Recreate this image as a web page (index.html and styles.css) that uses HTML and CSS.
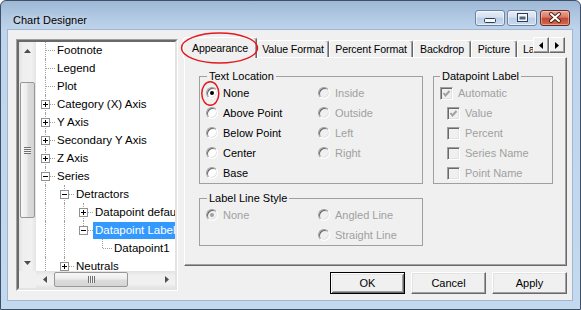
FILE: index.html
```html
<!DOCTYPE html>
<html>
<head>
<meta charset="utf-8">
<title>Chart Designer</title>
<link rel="stylesheet" href="styles.css">
</head>
<body>
<div class="window">
  <div class="titlebar">
    <span class="title">Chart Designer</span>
    <div class="caption">
      <span class="cbtn cmin"><svg width="28" height="14" viewBox="0 0 28 14"><rect x="8.5" y="7.5" width="11" height="4" rx="1" fill="#f4f7fb" stroke="#2f3d52"/></svg></span>
      <span class="cbtn cmax"><svg width="28" height="14" viewBox="0 0 28 14"><rect x="9.5" y="2.5" width="10" height="8" fill="#f4f7fb" stroke="#2f3d52"/><rect x="11.5" y="5.5" width="6" height="3" fill="#53647c"/></svg></span>
      <span class="cbtn cclose"><svg width="28" height="14" viewBox="0 0 28 14"><path d="M10 3 L18 10 M18 3 L10 10" stroke="#4a2219" stroke-width="4" stroke-linecap="round"/><path d="M10 3 L18 10 M18 3 L10 10" stroke="#ffffff" stroke-width="2" stroke-linecap="round"/></svg></span>
    </div>
  </div>
  <div class="client">
    <div class="tree">
      <div class="tree-inner">
        <div class="vscroll">
          <div class="sarrow"><svg width="7" height="4"><path d="M0 4 L3.5 0 L7 4Z" fill="#4d4d4d"/></svg></div>
          <div class="thumb vthumb"></div>
          <div class="sarrow end"><svg width="7" height="4"><path d="M0 0 L3.5 4 L7 0Z" fill="#4d4d4d"/></svg></div>
        </div>
        <div class="tree-view">
          <div class="rows">
            <div class="row"><span class="g t"></span><span class="lbl">Footnote</span></div>
            <div class="row"><span class="g t"></span><span class="lbl">Legend</span></div>
            <div class="row"><span class="g t"></span><span class="lbl">Plot</span></div>
            <div class="row"><span class="g t"><i class="bx p"></i></span><span class="lbl">Category (X) Axis</span></div>
            <div class="row"><span class="g t"><i class="bx p"></i></span><span class="lbl">Y Axis</span></div>
            <div class="row"><span class="g t"><i class="bx p"></i></span><span class="lbl">Secondary Y Axis</span></div>
            <div class="row"><span class="g t"><i class="bx p"></i></span><span class="lbl">Z Axis</span></div>
            <div class="row"><span class="g t"><i class="bx m"></i></span><span class="lbl">Series</span></div>
            <div class="row"><span class="g v"></span><span class="g t"><i class="bx m"></i></span><span class="lbl">Detractors</span></div>
            <div class="row"><span class="g v"></span><span class="g v"></span><span class="g t"><i class="bx p"></i></span><span class="lbl">Datapoint defaults</span></div>
            <div class="row"><span class="g v"></span><span class="g v"></span><span class="g l"><i class="bx m"></i></span><span class="lbl sel">Datapoint Labels</span></div>
            <div class="row"><span class="g v"></span><span class="g v"></span><span class="g"></span><span class="g l"></span><span class="lbl">Datapoint1</span></div>
            <div class="row"><span class="g v"></span><span class="g t"><i class="bx p"></i></span><span class="lbl">Neutrals</span></div>
          </div>
        </div>
        <div class="corner"></div>
        <div class="hscroll">
          <div class="sarrow h"><svg width="4" height="7"><path d="M4 0 L0 3.5 L4 7Z" fill="#4d4d4d"/></svg></div>
          <div class="thumb hthumb"></div>
          <div class="sarrow h end"><svg width="4" height="7"><path d="M0 0 L4 3.5 L0 7Z" fill="#4d4d4d"/></svg></div>
        </div>
      </div>
    </div>

    <div class="right">
      <div class="tabstrip">
        <div class="tabs">
          <div class="tab sel t-app">Appearance</div>
          <div class="tab t-vf">Value Format</div>
          <div class="tab t-pf">Percent Format</div>
          <div class="tab t-bd">Backdrop</div>
          <div class="tab t-pi">Picture</div>
          <div class="tab t-la">Labels</div>
        </div>
        <div class="tabarrows">
          <span class="abtn"><svg width="4" height="7"><path d="M4 0 L0 3.5 L4 7Z" fill="#000"/></svg></span>
          <span class="abtn"><svg width="4" height="7"><path d="M0 0 L4 3.5 L0 7Z" fill="#000"/></svg></span>
        </div>
      </div>

      <div class="panel">
        <fieldset class="grp g-text">
          <legend>Text Location</legend>
          <div class="opts five">
            <label class="opt"><span class="radio on"></span>None</label>
            <label class="opt"><span class="radio"></span>Above Point</label>
            <label class="opt"><span class="radio"></span>Below Point</label>
            <label class="opt"><span class="radio"></span>Center</label>
            <label class="opt"><span class="radio"></span>Base</label>
            <label class="opt dis"><span class="radio"></span>Inside</label>
            <label class="opt dis"><span class="radio"></span>Outside</label>
            <label class="opt dis"><span class="radio"></span>Left</label>
            <label class="opt dis"><span class="radio"></span>Right</label>
          </div>
        </fieldset>

        <fieldset class="grp g-label">
          <legend>Datapoint Label</legend>
          <div class="checks">
            <label class="opt dis"><span class="check on"><svg width="9" height="9"><path d="M1.5 4 L3.5 6.5 L7.5 2" fill="none" stroke="#a0a0a0" stroke-width="2"/></svg></span>Automatic</label>
            <label class="opt dis sub"><span class="check on"><svg width="9" height="9"><path d="M1.5 4 L3.5 6.5 L7.5 2" fill="none" stroke="#a0a0a0" stroke-width="2"/></svg></span>Value</label>
            <label class="opt dis sub"><span class="check"></span>Percent</label>
            <label class="opt dis sub"><span class="check"></span>Series Name</label>
            <label class="opt dis sub"><span class="check"></span>Point Name</label>
          </div>
        </fieldset>

        <fieldset class="grp g-line">
          <legend>Label Line Style</legend>
          <div class="opts two">
            <label class="opt dis"><span class="radio on"></span>None</label>
            <span></span>
            <label class="opt dis"><span class="radio"></span>Angled Line</label>
            <label class="opt dis"><span class="radio"></span>Straight Line</label>
          </div>
        </fieldset>
      </div>

      <div class="buttons">
        <button class="btn default">OK</button>
        <button class="btn">Cancel</button>
        <button class="btn">Apply</button>
      </div>
    </div>
  </div>

  <svg class="annot" width="581" height="310" viewBox="0 0 581 310">
    <ellipse cx="219.5" cy="48" rx="38" ry="15" fill="none" stroke="#e3191f" stroke-width="1.5"/>
    <ellipse cx="210.3" cy="93.5" rx="8.5" ry="11.8" fill="none" stroke="#e3191f" stroke-width="1.5"/>
  </svg>
</div>
</body>
</html>
```

FILE: styles.css
```css
html, body {
  margin: 0;
  padding: 0;
  background: #ffffff;
}

body {
  font-family: "Liberation Sans", Arial, sans-serif;
  font-size: 11px;
  color: #000;
}

.window {
  position: relative;
  width: 581px;
  height: 310px;
  box-sizing: border-box;
  border: 1px solid #3e4f66;
  border-radius: 6px 6px 0 0;
  background: linear-gradient(180deg, #9db7d5 0px, #b2c9e3 16px, #bfd5ed 30px, #c3d9f0 100%);
  padding: 0 7px 8px 6px;
  display: flex;
  flex-direction: column;
}

/* ---------- title bar ---------- */
.titlebar {
  height: 28px;
  display: flex;
  align-items: flex-start;
  flex: none;
}

.title {
  margin: 12px 0 0 6px;
  font-size: 11px;
  line-height: 14px;
  color: #000;
  text-shadow: 0 0 6px rgba(255, 255, 255, 0.7);
}

.caption {
  margin: 9px 3px 0 auto;
  display: flex;
}

.cbtn {
  width: 30px;
  height: 16px;
  box-sizing: border-box;
  border: 1px solid #6f83a0;
  border-radius: 3px;
  background: linear-gradient(180deg, #e6eef8 0%, #d3e0f0 45%, #bccfe7 50%, #c8daef 100%);
  box-shadow: inset 0 0 0 1px rgba(255, 255, 255, 0.55);
  display: flex;
  align-items: center;
  justify-content: center;
}

.cmax {
  margin-left: 2px;
}

.cclose {
  margin-left: 3px;
  border-color: #6c2a22;
  background: linear-gradient(180deg, #e8a696 0%, #d57a68 45%, #c2472f 50%, #cf6a50 100%);
  box-shadow: inset 0 0 0 1px rgba(255, 220, 210, 0.45);
}

/* ---------- client ---------- */
.client {
  height: 272px;
  box-sizing: border-box;
  border: 1px solid #a2b6cd;
  background: #f0f0f0;
  padding: 7px 5px 6px 8px;
  display: flex;
  flex: none;
}

/* ---------- tree ---------- */
.tree {
  width: 162px;
  height: 252px;
  margin-top: 2px;
  box-sizing: border-box;
  border: 1px solid;
  border-color: #a0a0a0 #ffffff #ffffff #a0a0a0;
  flex: none;
}

.tree-inner {
  height: 100%;
  box-sizing: border-box;
  border: 2px solid;
  border-color: #696969 #e3e3e3 #e3e3e3 #696969;
  background: #fff;
  display: grid;
  grid-template-columns: 17px 1fr;
  grid-template-rows: 1fr 17px;
  overflow: hidden;
}

.vscroll {
  grid-column: 1;
  grid-row: 1;
  display: flex;
  flex-direction: column;
  background: linear-gradient(90deg, #e2e2e2 0%, #efefef 25%, #f1f1f1 75%, #e4e4e4 100%);
}

.hscroll {
  grid-column: 2;
  grid-row: 2;
  display: flex;
  background: linear-gradient(180deg, #e2e2e2 0%, #efefef 25%, #f1f1f1 75%, #e4e4e4 100%);
}

.corner {
  grid-column: 1;
  grid-row: 2;
  background: #f0f0f0;
}

.tree-view {
  grid-column: 2;
  grid-row: 1;
  overflow: hidden;
  position: relative;
}

.sarrow {
  height: 17px;
  flex: none;
  display: flex;
  align-items: center;
  justify-content: center;
}

.sarrow.h {
  width: 17px;
  height: auto;
}

.sarrow.end {
  margin-top: auto;
}

.sarrow.h.end {
  margin-top: 0;
  margin-left: auto;
}

.thumb {
  box-sizing: border-box;
  border: 1px solid #979797;
  border-radius: 2px;
  display: flex;
  align-items: center;
  justify-content: center;
  flex: none;
}

.vthumb {
  margin: 23px 1px 0;
  height: 136px;
  background: linear-gradient(90deg, #f7f7f7 0%, #ececec 45%, #dcdcdc 55%, #d4d4d4 100%);
}

.hthumb {
  margin: 1px 0 1px 1px;
  width: 74px;
  background: linear-gradient(180deg, #f7f7f7 0%, #ececec 45%, #dcdcdc 55%, #d4d4d4 100%);
}

.vthumb::after {
  content: "";
  width: 7px;
  height: 7px;
  background: repeating-linear-gradient(180deg, #6f6f6f 0 1px, #f4f4f4 1px 2px);
}

.hthumb::after {
  content: "";
  width: 7px;
  height: 7px;
  background: repeating-linear-gradient(90deg, #6f6f6f 0 1px, #f4f4f4 1px 2px);
}

.rows {
  margin-top: -1px;
}

.row {
  height: 18px;
  display: flex;
  white-space: nowrap;
  font-size: 11.5px;
}

.g {
  width: 19px;
  height: 18px;
  flex: none;
  position: relative;
}

.g.v::before,
.g.t::before,
.g.l::before {
  content: "";
  position: absolute;
  left: 9px;
  top: 0;
  height: 18px;
  border-left: 1px dotted #a0a0a0;
}

.g.l::before {
  height: 9px;
}

.g.t::after,
.g.l::after {
  content: "";
  position: absolute;
  left: 10px;
  top: 9px;
  width: 9px;
  border-top: 1px dotted #a0a0a0;
}

.bx {
  position: absolute;
  left: 5px;
  top: 5px;
  width: 9px;
  height: 9px;
  box-sizing: border-box;
  border: 1px solid #919191;
  background: #fff;
  z-index: 1;
}

.bx::before {
  content: "";
  position: absolute;
  left: 1px;
  top: 3px;
  width: 5px;
  height: 1px;
  background: #000;
}

.bx.p::after {
  content: "";
  position: absolute;
  left: 3px;
  top: 1px;
  width: 1px;
  height: 5px;
  background: #000;
}

.lbl {
  flex: none;
  padding: 0 2px;
  height: 17px;
  line-height: 17px;
  margin-top: 1px;
}

.lbl.sel {
  background: #3399ff;
  color: #fff;
}

/* ---------- right side ---------- */
.right {
  width: 384px;
  margin-left: 5px;
  display: flex;
  flex-direction: column;
  flex: none;
}

.tabstrip {
  height: 21px;
  display: flex;
  position: relative;
  z-index: 1;
  flex: none;
}

.tabs {
  width: 350px;
  height: 21px;
  overflow: hidden;
  display: flex;
  align-items: flex-start;
  flex: none;
}

.tab {
  flex: none;
  height: 17px;
  margin-top: 3px;
  box-sizing: border-box;
  border-top: 1px solid #fff;
  border-left: 1px solid #fff;
  border-right: 1px solid #696969;
  box-shadow: inset -1px 0 0 #a0a0a0;
  border-radius: 3px 3px 0 0;
  background: #f0f0f0;
  font-size: 10.6px;
  letter-spacing: -0.1px;
  line-height: 16px;
  text-align: center;
  white-space: nowrap;
  overflow: hidden;
}

.tab.sel {
  height: 21px;
  margin-top: 0;
  padding-top: 2px;
}

.t-app { width: 74px; }
.t-vf { width: 72px; }
.t-pf { width: 84px; }
.t-bd { width: 58px; }
.t-pi { width: 46px; }
.t-la { width: 60px; text-align: left; padding-left: 5px; }

.tabarrows {
  display: flex;
  flex: none;
}

.abtn {
  width: 16px;
  height: 16px;
  box-sizing: border-box;
  border: 1px solid;
  border-color: #fff #696969 #696969 #fff;
  box-shadow: inset -1px -1px 0 #a0a0a0;
  background: #f0f0f0;
  display: flex;
  align-items: center;
  justify-content: center;
}

.panel {
  margin: -1px 0 0 1px;
  height: 209px;
  box-sizing: border-box;
  border: 1px solid;
  border-color: #fff #696969 #696969 #fff;
  box-shadow: inset -1px -1px 0 #a0a0a0;
  padding: 12px 0 0 14px;
  display: grid;
  grid-template-columns: 224px 120px;
  column-gap: 10px;
  row-gap: 8px;
  align-content: start;
  align-items: start;
  flex: none;
}

fieldset.grp {
  margin: 0;
  padding: 0 6px;
  border: 1px solid #a0a0a0;
  min-width: 0;
}

legend {
  padding: 0 2px;
  margin-left: 1px;
  font-size: 11px;
  line-height: 13px;
}

.g-label {
  padding-left: 5px;
}

.g-label legend {
  margin-left: 0;
}

.g-line {
  grid-column: 1;
  padding-top: 1px;
  padding-bottom: 2px;
}

.opts {
  display: grid;
  grid-template-columns: 112px 1fr;
  grid-auto-flow: column;
}

.opts.five {
  grid-template-rows: repeat(5, 20px);
}

.opts.two {
  grid-template-rows: repeat(2, 20px);
}

.checks {
  display: flex;
  flex-direction: column;
}

.opt {
  height: 20px;
  display: flex;
  align-items: center;
  gap: 5px;
  white-space: nowrap;
}

.opt.dis {
  color: #a0a0a0;
}

.opt.sub {
  margin-left: 7px;
}

.radio {
  width: 12px;
  height: 12px;
  box-sizing: border-box;
  border-radius: 50%;
  border: 1px solid;
  border-color: #a0a0a0 #ffffff #ffffff #a0a0a0;
  box-shadow: inset 1px 1px 0 #696969, inset -1px -1px 0 #e3e3e3;
  background: #fff;
  position: relative;
  flex: none;
}

.opt.dis .radio {
  background: #f0f0f0;
}

.radio.on::after {
  content: "";
  position: absolute;
  left: 3px;
  top: 3px;
  width: 4px;
  height: 4px;
  border-radius: 50%;
  background: #000;
}

.opt.dis .radio.on::after {
  background: #a0a0a0;
}

.check {
  width: 13px;
  height: 13px;
  box-sizing: border-box;
  border: 1px solid;
  border-color: #a0a0a0 #ffffff #ffffff #a0a0a0;
  box-shadow: inset 1px 1px 0 #696969, inset -1px -1px 0 #e3e3e3;
  background: #f0f0f0;
  display: flex;
  align-items: center;
  justify-content: center;
  flex: none;
}

.buttons {
  margin-top: 6px;
  display: flex;
  justify-content: flex-end;
  gap: 6px;
}

.btn {
  width: 75px;
  height: 22px;
  box-sizing: border-box;
  margin: 0;
  padding: 0;
  font-family: "Liberation Sans", Arial, sans-serif;
  font-size: 11px;
  color: #000;
  background: #f0f0f0;
  border: 1px solid;
  border-color: #fff #696969 #696969 #fff;
  box-shadow: inset -1px -1px 0 #a0a0a0, inset 1px 1px 0 #e3e3e3;
  border-radius: 0;
}

.btn.default {
  border-color: #000;
  box-shadow: inset 1px 1px 0 #fff, inset -1px -1px 0 #696969, inset 2px 2px 0 #e3e3e3, inset -2px -2px 0 #a0a0a0;
}

/* ---------- annotations ---------- */
.annot {
  position: absolute;
  left: -1px;
  top: -1px;
  pointer-events: none;
  z-index: 5;
}
```
